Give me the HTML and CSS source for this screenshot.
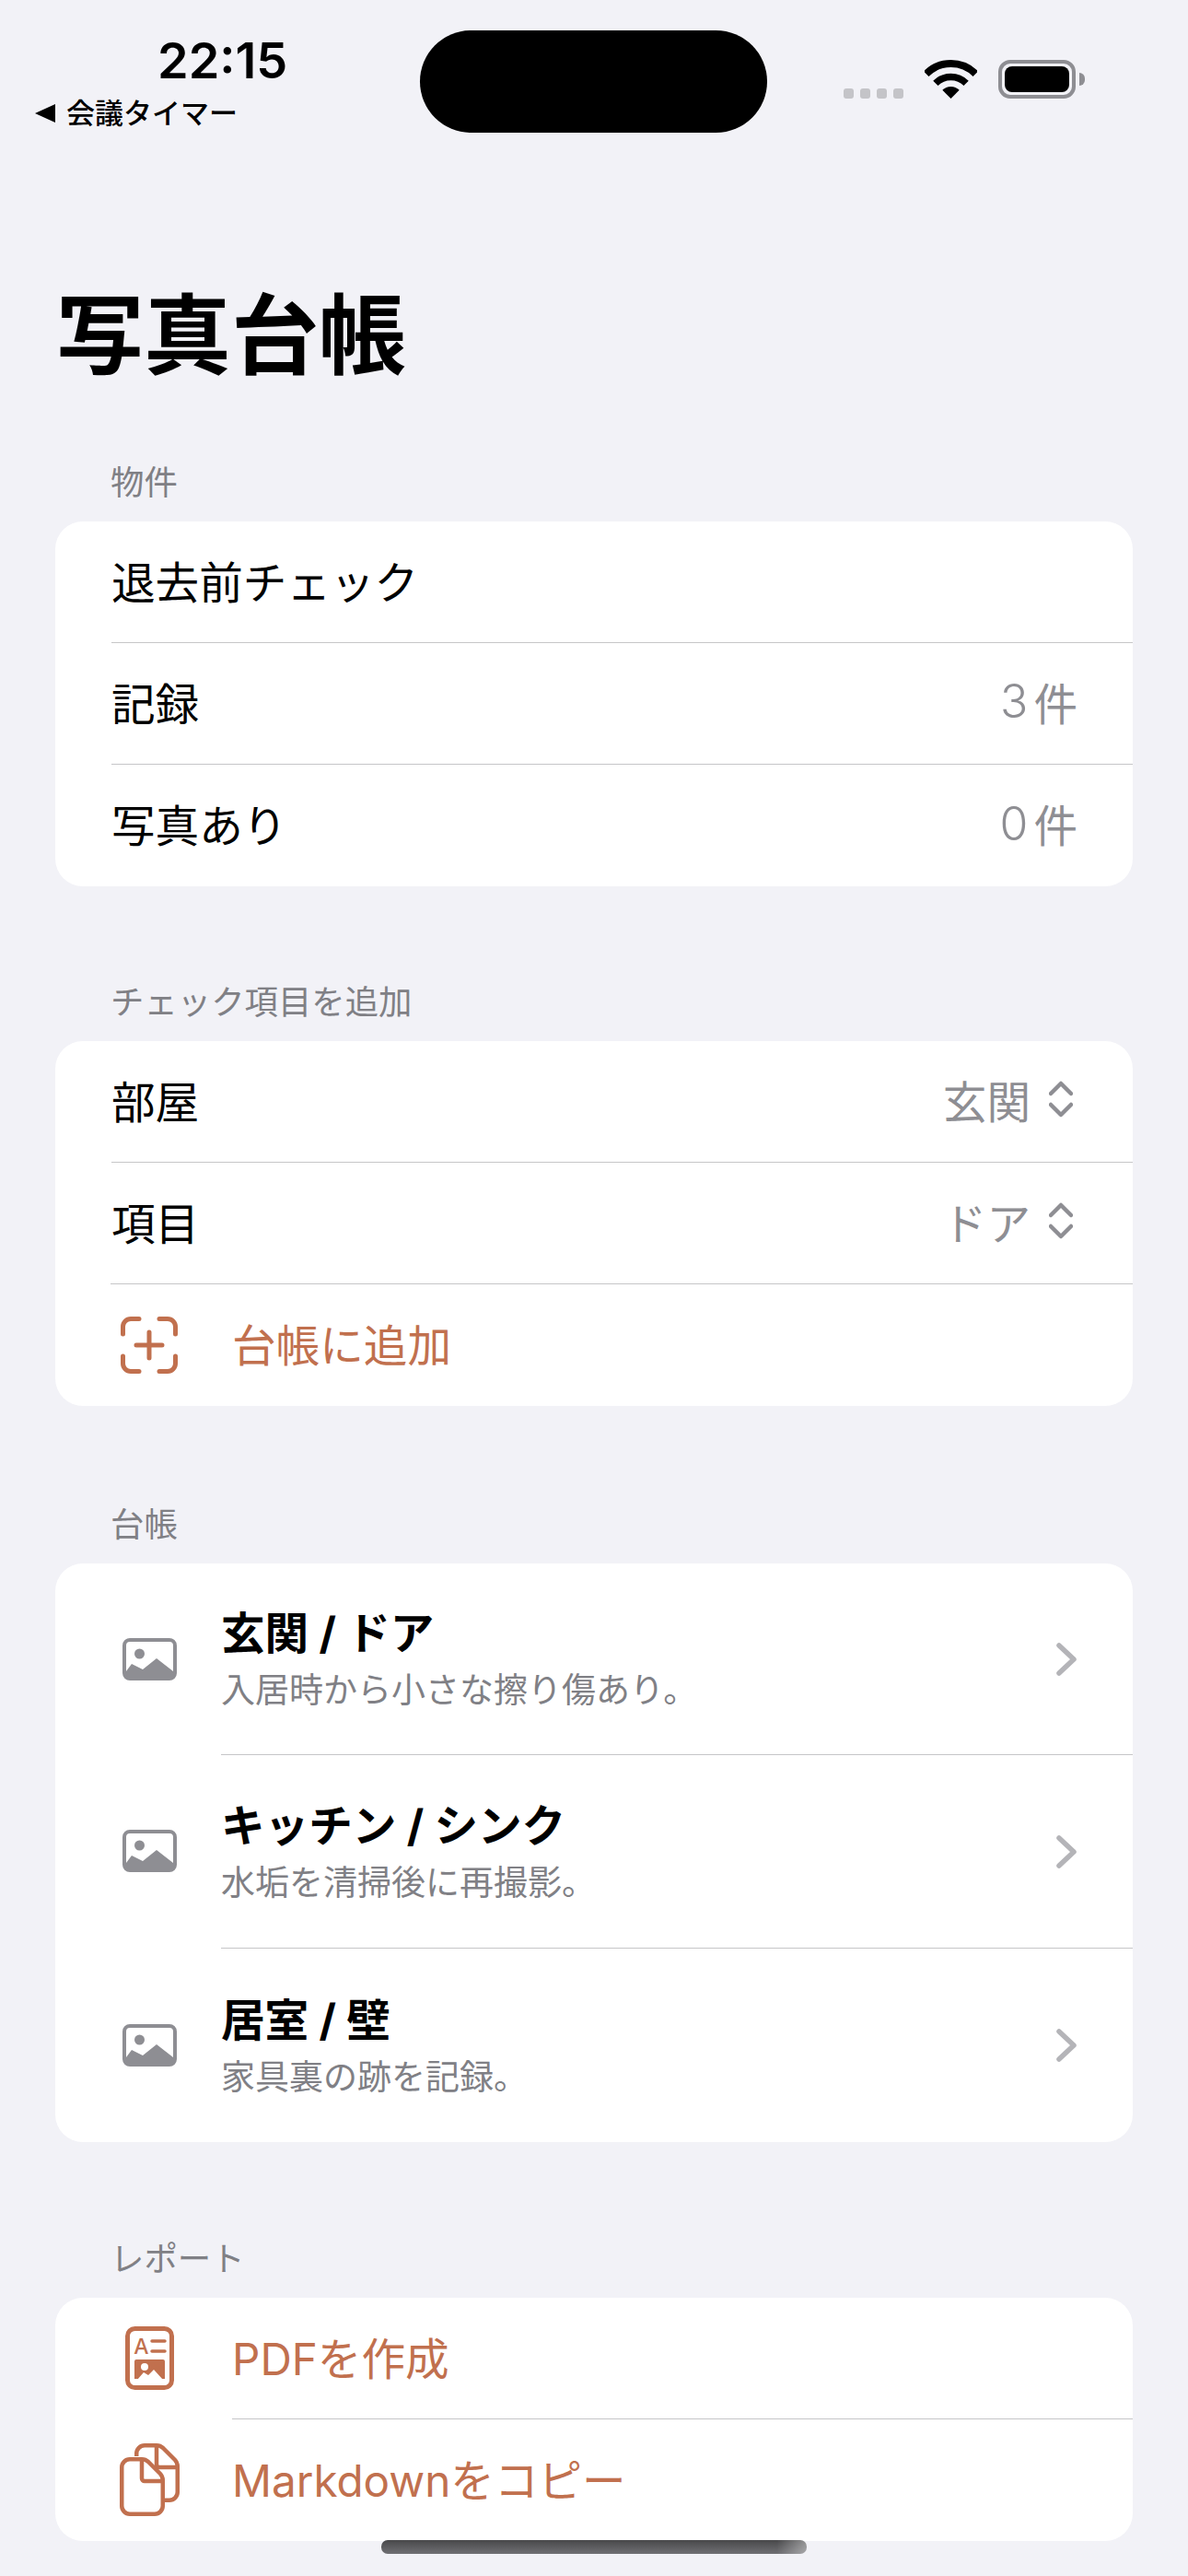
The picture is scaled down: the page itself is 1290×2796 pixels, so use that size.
FILE: index.html
```html
<!DOCTYPE html>
<html lang="ja">
<head>
    <meta charset="UTF-8">
    <meta name="viewport" content="width=device-width, initial-scale=1.0">
    <title>写真台帳</title>
    <link rel="stylesheet" href="styles.css">
</head>
<body>
    <!-- Status bar -->
    <header class="status">
        <div class="status-left">
            <div class="time">22:15</div>
            <div class="back"><span class="back-arrow"></span>会議タイマー</div>
        </div>
        <div class="island"></div>
        <div class="status-right">
            <div class="signal"><i></i><i></i><i></i><i></i></div>
            <svg class="wifi" width="57" height="42" viewBox="0 0 57 42">
                <path d="M1.63 15.13A38 38 0 0 1 55.37 15.13" fill="none" stroke="#000" stroke-width="8"/>
                <path d="M11.9 25.4A23.5 23.5 0 0 1 45.1 25.4" fill="none" stroke="#000" stroke-width="7.5"/>
                <path d="M28.5 42L19.3 32.8A13 13 0 0 1 37.7 32.8Z" fill="#000"/>
            </svg>
            <div class="battery"><span class="battery-fill"></span></div>
            <span class="battery-tip"></span>
        </div>
    </header>

    <h1 class="title">写真台帳</h1>

    <section class="group group-first">
        <h2 class="group-label">物件</h2>
        <div class="card">
            <div class="row"><div class="row-body">退去前チェック</div></div>
            <div class="row"><div class="row-body">記録<span class="value"><span class="num">3</span>件</span></div></div>
            <div class="row"><div class="row-body">写真あり<span class="value"><span class="num">0</span>件</span></div></div>
        </div>
    </section>

    <section class="group">
        <h2 class="group-label">チェック項目を追加</h2>
        <div class="card">
            <div class="row">
                <div class="row-body">部屋
                    <span class="value picker">玄関
                        <svg width="26" height="40" viewBox="0 0 26 40"><path d="M2 14L13 3L24 14M2 26L13 37L24 26" fill="none" stroke="#8e8e93" stroke-width="4.5" stroke-linecap="round" stroke-linejoin="round"/></svg>
                    </span>
                </div>
            </div>
            <div class="row">
                <div class="row-body">項目
                    <span class="value picker">ドア
                        <svg width="26" height="40" viewBox="0 0 26 40"><path d="M2 14L13 3L24 14M2 26L13 37L24 26" fill="none" stroke="#8e8e93" stroke-width="4.5" stroke-linecap="round" stroke-linejoin="round"/></svg>
                    </span>
                </div>
            </div>
            <div class="row row-action row-add">
                <div class="row-icon">
                    <svg width="62" height="62" viewBox="0 0 62 62" fill="none" stroke="#c1704e" stroke-width="5" stroke-linecap="round">
                        <path d="M2.5 19V11A8.5 8.5 0 0 1 11 2.5H20M42 2.5H51A8.5 8.5 0 0 1 59.5 11V19M59.5 43V51A8.5 8.5 0 0 1 51 59.5H42M20 59.5H11A8.5 8.5 0 0 1 2.5 51V43"/>
                        <path d="M31 17V45M17 31H45"/>
                    </svg>
                </div>
                <div class="row-body">台帳に追加</div>
            </div>
        </div>
    </section>

    <section class="group group-ledger">
        <h2 class="group-label">台帳</h2>
        <div class="card">
            <div class="row row-entry">
                <div class="row-icon">
                    <svg width="59" height="46" viewBox="0 0 59 46">
                        <rect x="2" y="2" width="55" height="42" rx="6" fill="#fff" stroke="#8e8e93" stroke-width="4"/>
                        <circle cx="18.5" cy="17" r="5.5" fill="#8e8e93"/>
                        <path d="M4 36L10 28L22 34L37 22L55 36V42H4Z" fill="#8e8e93"/>
                    </svg>
                </div>
                <div class="row-body">
                    <div class="entry-text">
                        <div class="entry-title">玄関 / ドア</div>
                        <div class="entry-note">入居時から小さな擦り傷あり。</div>
                    </div>
                    <svg class="chevron" width="24" height="38" viewBox="0 0 24 38"><path d="M4 4L20 19L4 34" fill="none" stroke="#b4b4b8" stroke-width="5.5" stroke-linecap="round" stroke-linejoin="round"/></svg>
                </div>
            </div>
            <div class="row row-entry">
                <div class="row-icon">
                    <svg width="59" height="46" viewBox="0 0 59 46">
                        <rect x="2" y="2" width="55" height="42" rx="6" fill="#fff" stroke="#8e8e93" stroke-width="4"/>
                        <circle cx="18.5" cy="17" r="5.5" fill="#8e8e93"/>
                        <path d="M4 36L10 28L22 34L37 22L55 36V42H4Z" fill="#8e8e93"/>
                    </svg>
                </div>
                <div class="row-body">
                    <div class="entry-text">
                        <div class="entry-title">キッチン / シンク</div>
                        <div class="entry-note">水垢を清掃後に再撮影。</div>
                    </div>
                    <svg class="chevron" width="24" height="38" viewBox="0 0 24 38"><path d="M4 4L20 19L4 34" fill="none" stroke="#b4b4b8" stroke-width="5.5" stroke-linecap="round" stroke-linejoin="round"/></svg>
                </div>
            </div>
            <div class="row row-entry">
                <div class="row-icon">
                    <svg width="59" height="46" viewBox="0 0 59 46">
                        <rect x="2" y="2" width="55" height="42" rx="6" fill="#fff" stroke="#8e8e93" stroke-width="4"/>
                        <circle cx="18.5" cy="17" r="5.5" fill="#8e8e93"/>
                        <path d="M4 36L10 28L22 34L37 22L55 36V42H4Z" fill="#8e8e93"/>
                    </svg>
                </div>
                <div class="row-body">
                    <div class="entry-text">
                        <div class="entry-title">居室 / 壁</div>
                        <div class="entry-note">家具裏の跡を記録。</div>
                    </div>
                    <svg class="chevron" width="24" height="38" viewBox="0 0 24 38"><path d="M4 4L20 19L4 34" fill="none" stroke="#b4b4b8" stroke-width="5.5" stroke-linecap="round" stroke-linejoin="round"/></svg>
                </div>
            </div>
        </div>
    </section>

    <section class="group group-report">
        <h2 class="group-label">レポート</h2>
        <div class="card">
            <div class="row row-action">
                <div class="row-icon">
                    <svg width="53" height="69" viewBox="0 0 53 69">
                        <rect x="2.5" y="2.5" width="48" height="64" rx="8" fill="none" stroke="#c1704e" stroke-width="5"/>
                        <text x="17.5" y="30" class="doc-letter">A</text>
                        <path d="M29 16H43M29 27H43" stroke="#c1704e" stroke-width="3.5" stroke-linecap="round"/>
                        <path d="M10 38A2 2 0 0 1 12 36H41A2 2 0 0 1 43 38V57H10Z" fill="#c1704e"/>
                        <circle cx="21" cy="44" r="4" fill="#fff"/>
                        <path d="M13 58L20 50L25 53L31 47L41 58Z" fill="#fff"/>
                    </svg>
                </div>
                <div class="row-body">PDFを作成</div>
            </div>
            <div class="row row-action">
                <div class="row-icon">
                    <svg width="65" height="79" viewBox="0 0 65 79" fill="none" stroke="#c1704e" stroke-width="4.5" stroke-linejoin="round">
                        <path d="M18.25 14V11A8.75 8.75 0 0 1 27 2.25H40Q44 2.25 47 5L60 18Q62.75 21 62.75 25V53A8.75 8.75 0 0 1 54 61.75H49"/>
                        <path d="M40 2.25V23A3 3 0 0 0 43 26H62"/>
                        <path d="M11 17.25H24Q28 17.25 31 20L44 33Q46.75 36 46.75 40V68A8.75 8.75 0 0 1 38 76.75H11A8.75 8.75 0 0 1 2.25 68V26A8.75 8.75 0 0 1 11 17.25Z"/>
                        <path d="M24 17.25V38A3 3 0 0 0 27 41H46"/>
                    </svg>
                </div>
                <div class="row-body">Markdownをコピー</div>
            </div>
        </div>
    </section>

    <div class="home-bar"></div>
</body>
</html>
```

FILE: styles.css
```css
* {
    box-sizing: border-box;
}
html, body {
    margin: 0;
    height: 2796px;
    overflow: hidden;
}
body {
    position: relative;
    padding: 33px 60px 0;
    background: #f2f2f7;
    color: #000;
    font-family: Inter, "Noto Sans CJK JP", sans-serif;
}

/* Status bar */
.status {
    display: flex;
    height: 111px;
    margin: 0 -60px;
}
.status-left {
    width: 456px;
    padding-left: 38px;
}
.time {
    margin: 6px 0 0 133px;
    font-size: 54px;
    font-weight: 600;
    line-height: 54px;
}
.back {
    display: flex;
    align-items: center;
    gap: 12px;
    margin-top: 10px;
    font-size: 31px;
    font-weight: 500;
    line-height: 40px;
}
.back-arrow {
    width: 0;
    height: 0;
    border-top: 10px solid transparent;
    border-bottom: 10px solid transparent;
    border-right: 22px solid #000;
}
.island {
    width: 377px;
    height: 111px;
    border-radius: 56px;
    background: #000;
}
.status-right {
    display: flex;
    align-items: flex-end;
    height: 74px;
    padding-left: 83px;
}
.signal {
    display: flex;
    gap: 7px;
    margin-right: 23px;
}
.signal i {
    width: 11px;
    height: 11px;
    border-radius: 3px;
    background: #c4c4c8;
}
.wifi {
    margin-right: 23px;
}
.battery {
    width: 84px;
    height: 42px;
    padding: 3px;
    border: 4px solid #8e8e93;
    border-radius: 13px;
}
.battery-fill {
    display: block;
    height: 100%;
    border-radius: 8px;
    background: #000;
}
.battery-tip {
    width: 6px;
    height: 14px;
    margin: 0 0 14px 4px;
    border-radius: 0 7px 7px 0;
    background: #8e8e93;
}

.title {
    margin: 165px 0 0 1px;
    font-size: 95px;
    font-weight: 700;
    line-height: 112px;
}

/* Groups */
.group {
    margin-top: 104px;
}
.group-first {
    margin-top: 81px;
}
.group-ledger {
    margin-top: 107px;
}
.group-report {
    margin-top: 105px;
}
.group-label {
    margin: 0 0 20px 60px;
    color: #808085;
    font-size: 36.4px;
    font-weight: 400;
    line-height: 44px;
}
.card {
    overflow: hidden;
    border-radius: 30px;
    background: #fff;
}
.row {
    display: flex;
    height: 132px;
    padding-left: 61px;
    font-size: 47.6px;
}
.row:first-child {
    height: 131px;
}
.row:last-child {
    height: 133px;
}
.row-body {
    flex: 1;
    display: flex;
    align-items: center;
    justify-content: space-between;
    padding: 0 60px 5px 0;
}
.row + .row .row-body {
    border-top: 1px solid #c6c6c8;
}
.value {
    display: flex;
    align-items: center;
    gap: 20px;
    color: #8e8e93;
}
.num {
    margin-right: -14px;
    font-weight: 300;
    font-size: 50px;
}
.picker {
    margin-right: 5px;
}

/* Rows with a leading icon */
.row-icon {
    display: flex;
    align-items: center;
    justify-content: center;
    flex: none;
    width: 120px;
    margin-left: 42px;
}
.row-action {
    padding-left: 0;
    color: #c1704e;
}
.row-action .row-icon {
    margin-right: 30px;
}
.row-add {
    position: relative;
}
.row-add::before {
    content: "";
    position: absolute;
    left: 60px;
    right: 0;
    top: 0;
    border-top: 1px solid #c6c6c8;
}
.row + .row-add .row-body {
    border-top: none;
}
.row-entry {
    height: 210px;
    padding-left: 0;
}
.row-entry .row-icon {
    margin-right: 18px;
}
.row-entry .row-body {
    padding-bottom: 0;
}
.row-entry:first-child {
    height: 207px;
}
.row-entry:last-child {
    height: 211px;
}
.entry-title {
    font-size: 47.6px;
    font-weight: 700;
    line-height: 62px;
}
.entry-note {
    margin-top: 7px;
    color: #808085;
    font-size: 37px;
    line-height: 48px;
}
.doc-letter {
    fill: #c1704e;
    font-family: Inter, sans-serif;
    font-size: 23px;
    font-weight: 500;
    text-anchor: middle;
}

.home-bar {
    position: absolute;
    left: 414px;
    top: 2757px;
    width: 462px;
    height: 15px;
    border-radius: 7px;
    background: linear-gradient(to right, rgba(255, 255, 255, 0) 93%, rgba(255, 255, 255, 0.4)), linear-gradient(#48484a, #707074);
}
```
